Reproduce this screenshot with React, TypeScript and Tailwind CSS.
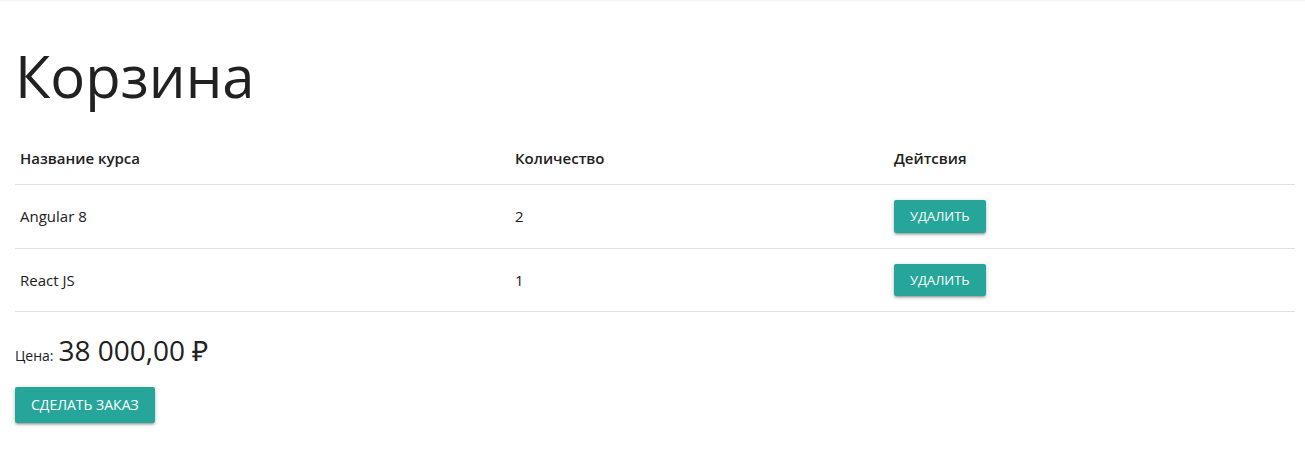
const courses = [
  { id: 1, title: "Angular 8", count: 2 },
  { id: 2, title: "React JS", count: 1 },
];

const btnShadow =
  "shadow-[0_2px_2px_0_rgba(0,0,0,0.14),0_3px_1px_-2px_rgba(0,0,0,0.12),0_1px_5px_0_rgba(0,0,0,0.2)]";

export default function App() {
  return (
    <div className="min-h-[475px] bg-white font-['Open_Sans',sans-serif] text-[#212121]">
      <div className="h-[2px] bg-gradient-to-b from-[#f3f3f3] to-white" />
      <div className="pl-[15px] pr-[10px]">
        <h1 className="mt-[42px] mb-[24px] text-[58px] leading-[1.1] font-normal">
          Корзина
        </h1>
        <table className="w-full border-collapse text-[15px]">
          <thead>
            <tr className="border-b border-[#e0e0e0]">
              <th className="w-[495px] px-[5px] py-[15px] text-left font-semibold leading-[1.5]">
                Название курса
              </th>
              <th className="w-[379px] px-[5px] py-[15px] text-left font-semibold leading-[1.5]">
                Количество
              </th>
              <th className="px-[5px] py-[15px] text-left font-semibold leading-[1.5]">
                Дейтсвия
              </th>
            </tr>
          </thead>
          <tbody>
            {courses.map((c) => (
              <tr key={c.id} className="border-b border-[#e0e0e0]">
                <td className="px-[5px] py-[15px] leading-[1.5]">{c.title}</td>
                <td className="px-[5px] py-[15px] leading-[1.5]">{c.count}</td>
                <td className="px-[5px] py-[15px] leading-[1.5]">
                  <button
                    className={`h-[32.4px] rounded-[2px] bg-[#26a69a] px-4 text-[13px] leading-[32.4px] text-white uppercase ${btnShadow}`}
                  >
                    Удалить
                  </button>
                </td>
              </tr>
            ))}
          </tbody>
        </table>
        <p className="mt-[22px] flex items-baseline gap-[5px]">
          <span className="text-[14px]">Цена:</span>
          <span className="text-[28px] leading-[1.2]">38 000,00 ₽</span>
        </p>
        <button
          className={`mt-[19px] h-9 rounded-[2px] bg-[#26a69a] px-4 text-[14px] leading-9 text-white uppercase ${btnShadow}`}
        >
          Сделать заказ
        </button>
      </div>
    </div>
  );
}
